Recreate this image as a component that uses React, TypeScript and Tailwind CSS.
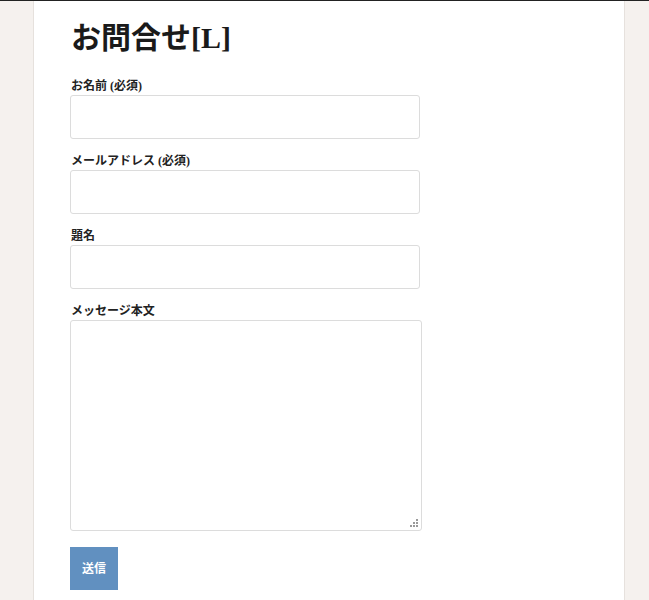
import React from "react";

const serif = { fontFamily: '"Liberation Serif", "Noto Sans CJK JP", serif' };

function Grip() {
  return (
    <svg className="absolute right-[3px] bottom-[3px]" width="9" height="9" viewBox="0 0 9 9">
      <rect x="6" y="0" width="2" height="2" fill="#9a9a9a" />
      <rect x="3" y="3" width="2" height="2" fill="#9a9a9a" />
      <rect x="6" y="3" width="2" height="2" fill="#9a9a9a" />
      <rect x="0" y="6" width="2" height="2" fill="#9a9a9a" />
      <rect x="3" y="6" width="2" height="2" fill="#9a9a9a" />
      <rect x="6" y="6" width="2" height="2" fill="#9a9a9a" />
    </svg>
  );
}

function Field({ label, area }: { label: string; area?: boolean }) {
  return (
    <div className="mb-[14px]">
      <label className="block text-[12px] leading-[17px] font-bold text-[#222] pl-[1px]">{label}</label>
      {area ? (
        <div className="relative w-[352px] h-[211px]">
          <textarea className="block w-[352px] h-[211px] border border-[#dcdcdc] rounded-[3px] bg-white outline-none resize-none" />
          <Grip />
        </div>
      ) : (
        <input className="block w-[350px] h-[44px] border border-[#dcdcdc] rounded-[3px] bg-white outline-none" />
      )}
    </div>
  );
}

export default function App() {
  return (
    <div className="min-h-screen bg-[#f5f1ee] border-t border-[#222]" style={serif}>
      <div className="ml-[33px] mr-[24px] min-h-[599px] bg-white border-x border-[#e6e1dd] pl-[36px] pt-[19px]">
        <h1 className="text-[30px] leading-[36px] font-bold text-[#1a1a1a] mb-[22px] pl-[1px]">お問合せ[L]</h1>
        <Field label="お名前 (必須)" />
        <Field label="メールアドレス (必須)" />
        <Field label="題名" />
        <Field label="メッセージ本文" area />
        <button className="mt-[2px] w-[48px] h-[43px] bg-[#6190c0] text-white text-[12px] font-bold">送信</button>
      </div>
    </div>
  );
}
